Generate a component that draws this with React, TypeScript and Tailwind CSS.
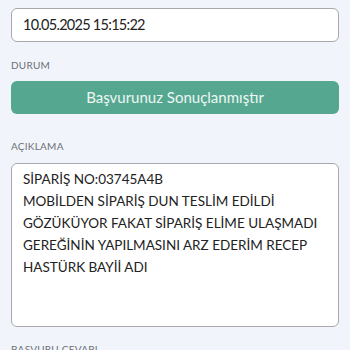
import React from 'react';

const description = [
  'SİPARİŞ NO:03745A4B',
  'MOBİLDEN SİPARİŞ DUN TESLİM EDİLDİ',
  'GÖZÜKÜYOR FAKAT SİPARİŞ ELİME ULAŞMADI',
  'GEREĞİNİN YAPILMASINI ARZ EDERİM RECEP',
  'HASTÜRK BAYİİ ADI',
];

const App: React.FC = () => {
  return (
    <div
      className="min-h-screen bg-[#f1f5fb] px-[11px] pt-[8px] text-[#222]"
      style={{ fontFamily: 'Lato, "Noto Sans", sans-serif' }}
    >
      {/* Tarih */}
      <div className="h-[34px] rounded-[6px] border border-[#a9a9ad] bg-white px-[11px] flex items-center text-[14.5px] tracking-[-0.05em]">
        10.05.2025 15:15:22
      </div>

      {/* Durum */}
      <div className="mt-[16px] text-[10px] tracking-wide text-[#6b6f76]">DURUM</div>
      <div className="mt-[8px] h-[33px] rounded-[6px] bg-[#55a78f] flex items-center justify-center text-[15px] text-white/90">
        Başvurunuz Sonuçlanmıştır
      </div>

      {/* Açıklama */}
      <div className="mt-[25px] text-[10px] tracking-wide text-[#6b6f76]">AÇIKLAMA</div>
      <div className="mt-[9px] h-[164px] rounded-[6px] border border-[#a9a9ad] bg-white px-[11px] pt-[4px] text-[13.5px] leading-[22px]">
        {description.map((line) => (
          <div key={line}>{line}</div>
        ))}
      </div>

      {/* Başvuru cevabı */}
      <div className="mt-[15px] text-[10px] tracking-wide text-[#6b6f76]">BAŞVURU CEVABI</div>
    </div>
  );
};

export default App;
